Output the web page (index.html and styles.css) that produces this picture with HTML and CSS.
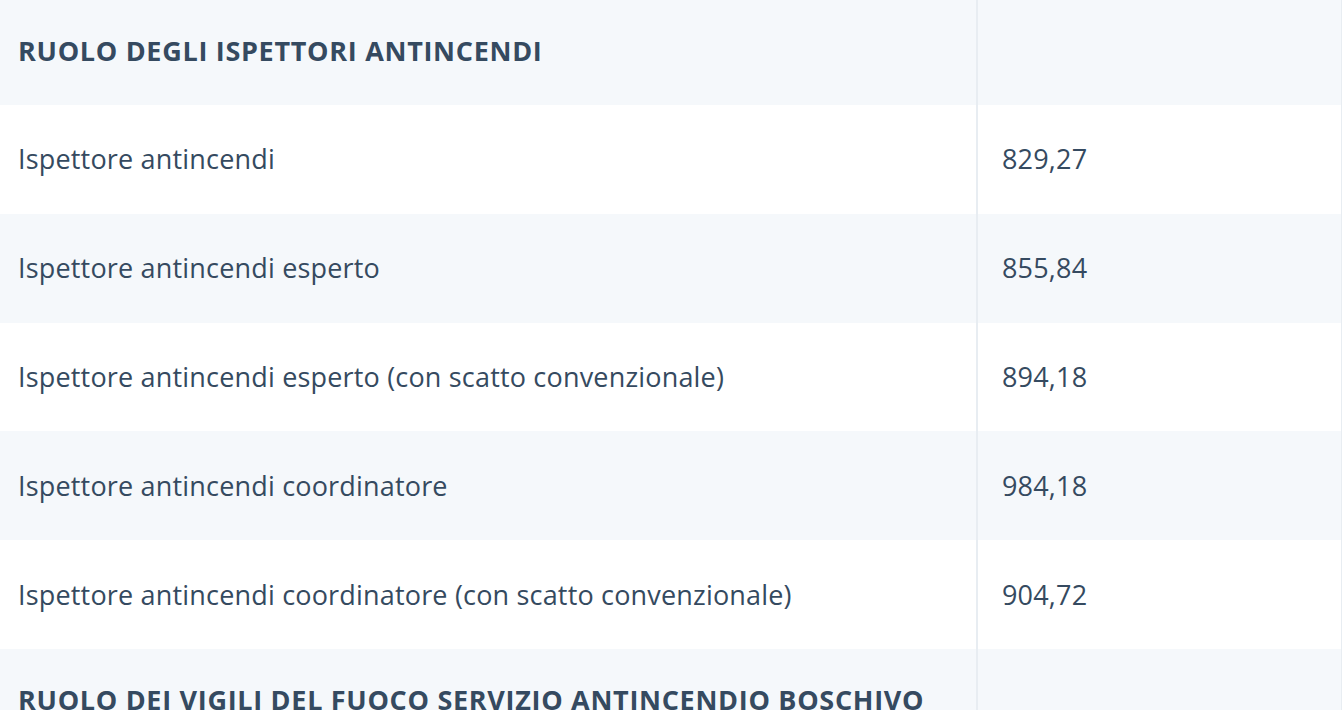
FILE: index.html
```html
<!DOCTYPE html>
<html lang="it">
<head>
  <meta charset="UTF-8">
  <meta name="viewport" content="width=device-width, initial-scale=1.0">
  <title>Ruoli e retribuzioni</title>
  <link rel="stylesheet" href="styles.css">
</head>
<body>

  <!-- Tabella degli importi per ruolo -->
  <table class="pay-table">
    <colgroup>
      <col class="col-role">
      <col class="col-amount">
    </colgroup>
    <tbody>
      <tr class="group-row">
        <td>RUOLO DEGLI ISPETTORI ANTINCENDI</td>
        <td></td>
      </tr>
      <tr>
        <td>Ispettore antincendi</td>
        <td>829,27</td>
      </tr>
      <tr>
        <td>Ispettore antincendi esperto</td>
        <td>855,84</td>
      </tr>
      <tr>
        <td>Ispettore antincendi esperto (con scatto convenzionale)</td>
        <td>894,18</td>
      </tr>
      <tr>
        <td>Ispettore antincendi coordinatore</td>
        <td>984,18</td>
      </tr>
      <tr>
        <td>Ispettore antincendi coordinatore (con scatto convenzionale)</td>
        <td>904,72</td>
      </tr>
      <tr class="group-row">
        <td>RUOLO DEI VIGILI DEL FUOCO SERVIZIO ANTINCENDIO BOSCHIVO</td>
        <td></td>
      </tr>
    </tbody>
  </table>

</body>
</html>
```

FILE: styles.css
```css
* {
  margin: 0;
  padding: 0;
  box-sizing: border-box;
}

body {
  font-family: 'Open Sans', 'Lato', sans-serif;
  background-color: #fff;
  color: #354a60;
  overflow: hidden;
}

.pay-table {
  width: 1342px;
  border-collapse: collapse;
  table-layout: fixed;
  border-right: 1px solid #e8edf2;
}

.col-role {
  width: 977px;
}

.pay-table tr:nth-child(odd) {
  background-color: #f5f8fb;
}

.pay-table td {
  font-size: 27px;
  line-height: 36px;
  letter-spacing: 0.18px;
  padding: 36.4px 18px;
  white-space: nowrap;
  vertical-align: middle;
}

.pay-table td:first-child {
  border-right: 2px solid #e8edf2;
}

.pay-table td:last-child {
  padding-left: 24px;
}

.group-row td {
  font-weight: 700;
  letter-spacing: 0.7px;
  padding-top: 33px;
  padding-bottom: 36px;
}
```
